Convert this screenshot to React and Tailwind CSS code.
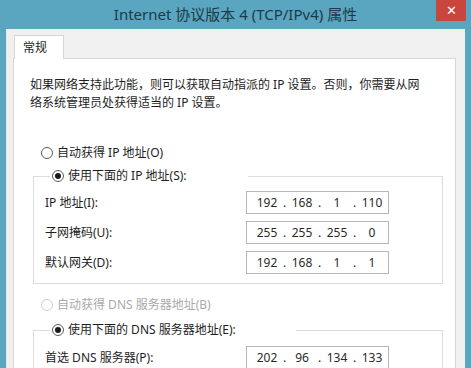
import React from 'react'

const font = { fontFamily: '"Noto Sans", "Noto Sans CJK SC", sans-serif' }

const Radio = ({ checked, disabled, label }) => (
  <div className={`flex items-center h-[18px] text-[12px] ${disabled ? 'text-[#a9a9a9]' : 'text-[#1e1e1e]'}`}>
    <span
      className={`w-[12px] h-[12px] rounded-full border flex items-center justify-center bg-white ${
        disabled ? 'border-[#cfcfcf]' : 'border-[#5c5c5c]'
      }`}
    >
      {checked && <span className="w-[6px] h-[6px] rounded-full bg-[#1a1a1a]" />}
    </span>
    <span className="ml-[4px] leading-[18px]">{label}</span>
  </div>
)

const IpBox = ({ parts }) => (
  <div className="w-[143px] h-[23px] border border-[#b7b7b7] bg-white flex items-center pl-[7px] text-[12px] text-[#2a2a2a]">
    {parts.map((p, i) => (
      <React.Fragment key={i}>
        {i > 0 && <span className="w-[9px] text-center">.</span>}
        <span className="w-[26px] text-center">{p}</span>
      </React.Fragment>
    ))}
  </div>
)

const Row = ({ label, parts }) => (
  <div className="flex items-center h-[23px]">
    <span className="w-[201px] text-[12px] text-[#1e1e1e]">{label}</span>
    <IpBox parts={parts} />
  </div>
)

export default function App() {
  return (
    <div className="relative w-[471px] h-[368px] overflow-hidden bg-[#5aa5c0]" style={font}>
      {/* title bar */}
      <div className="h-[29px] flex items-center justify-center text-[15px] text-[#1d3a4a]">
        Internet 协议版本 4 (TCP/IPv4) 属性
      </div>
      <div className="absolute top-0 right-[5px] w-[30px] h-[21px] bg-[#c8463d] flex items-center justify-center text-white text-[13px] leading-none">
        ✕
      </div>

      {/* dialog body */}
      <div className="ml-[6px] mr-[6px] h-[339px] bg-[#f0f0f0] border-l border-[#e6e6e6]">
        <div className="pl-[7px] pt-[6px] flex">
          <div className="relative z-10 -mb-px h-[24px] w-[50px] bg-white border border-b-0 border-[#d6d6d6] flex items-center pl-[8px] text-[12px] text-[#1e1e1e]">
            常规
          </div>
        </div>
        <div className="ml-[6px] w-[443px] h-[330px] bg-white border border-[#d6d6d6] pt-[17px] pl-[16px]">
          <p className="text-[12px] leading-[18px] text-[#1e1e1e]">
            如果网络支持此功能，则可以获取自动指派的 IP 设置。否则，你需要从网
            <br />
            络系统管理员处获得适当的 IP 设置。
          </p>

          <div className="ml-[11px] mt-[32px]">
            <Radio label="自动获得 IP 地址(O)" />
          </div>

          <fieldset className="ml-[3px] mt-[5px] w-[410px] border border-[#dcdcdc] pt-[6px] pb-[9px] pl-[11px] flex flex-col gap-[7px]">
            <legend className="ml-[5px] w-[198px] pl-[2px]">
              <Radio checked label="使用下面的 IP 地址(S):" />
            </legend>
            <Row label="IP 地址(I):" parts={['192', '168', '1', '110']} />
            <Row label="子网掩码(U):" parts={['255', '255', '255', '0']} />
            <Row label="默认网关(D):" parts={['192', '168', '1', '1']} />
          </fieldset>

          <div className="ml-[11px] mt-[12px]">
            <Radio disabled label="自动获得 DNS 服务器地址(B)" />
          </div>

          <fieldset className="ml-[3px] mt-[7px] w-[410px] border border-[#dcdcdc] pt-[7px] pb-[9px] pl-[11px] flex flex-col gap-[7px]">
            <legend className="ml-[5px] w-[246px] pl-[2px]">
              <Radio checked label="使用下面的 DNS 服务器地址(E):" />
            </legend>
            <Row label="首选 DNS 服务器(P):" parts={['202', '96', '134', '133']} />
          </fieldset>
        </div>
      </div>
    </div>
  )
}
